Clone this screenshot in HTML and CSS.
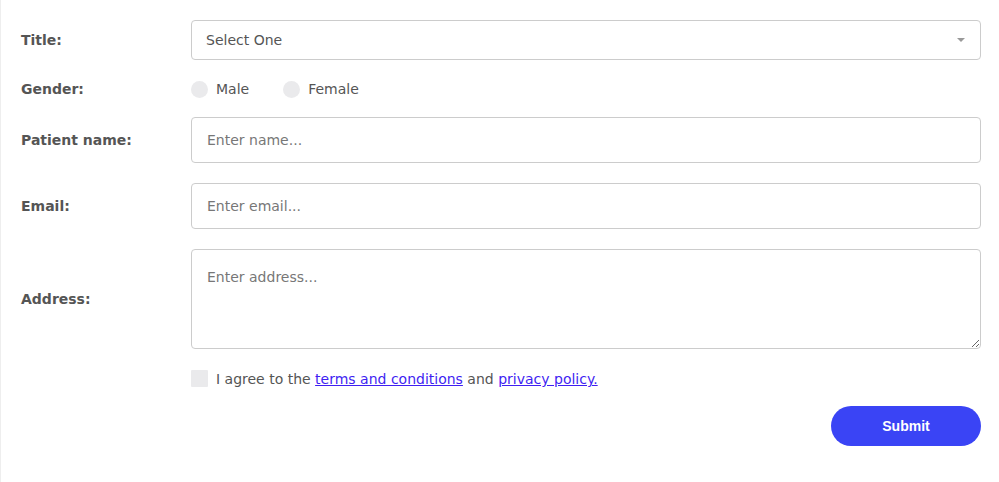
FILE: index.html
```html
<!DOCTYPE html>
<html lang="en">
<head>
<meta charset="utf-8">
<title>Patient form</title>
<link rel="stylesheet" href="styles.css">
</head>
<body>
<div class="page">
  <form class="form">
    <div class="row">
      <label class="label">Title:</label>
      <div class="field select-wrap">
        <select class="control select">
          <option>Select One</option>
        </select>
      </div>
    </div>
    <div class="row row-gender">
      <span class="label">Gender:</span>
      <div class="field radios">
        <label class="radio"><span class="dot"></span>Male</label>
        <label class="radio"><span class="dot"></span>Female</label>
      </div>
    </div>
    <div class="row">
      <label class="label">Patient name:</label>
      <div class="field"><input class="control input" type="text" placeholder="Enter name..."></div>
    </div>
    <div class="row">
      <label class="label">Email:</label>
      <div class="field"><input class="control input" type="text" placeholder="Enter email..."></div>
    </div>
    <div class="row">
      <label class="label">Address:</label>
      <div class="field"><textarea class="control textarea" placeholder="Enter address..."></textarea></div>
    </div>
    <div class="row row-agree">
      <span class="label"></span>
      <div class="field agree">
        <span class="box"></span>
        <span class="agree-text">I agree to the <a href="#">terms and conditions</a> and <a href="#">privacy policy.</a></span>
      </div>
    </div>
    <div class="actions">
      <button type="button" class="submit">Submit</button>
    </div>
  </form>
</div>
</body>
</html>
```
FILE: styles.css
```css
html, body {
  margin: 0;
  padding: 0;
  background: #fff;
  height: 100%;
}
.page {
  min-height: 100%;
  box-sizing: border-box;
  border-left: 1px solid #eeeeee;
  font-family: "DejaVu Sans", Verdana, sans-serif;
  font-size: 14px;
  color: #555;
}
.form {
  padding: 20px 18px 20px 20px;
  display: flex;
  flex-direction: column;
  gap: 20px;
}
.row {
  display: flex;
  align-items: center;
}
.label {
  width: 170px;
  flex: none;
  font-weight: bold;
  color: #555;
  line-height: 17px;
}
.row-gender {
  padding-top: 1px;
  margin-bottom: -1px;
}
.field {
  flex: 1;
  min-width: 0;
}
.control {
  display: block;
  width: 100%;
  box-sizing: border-box;
  border: 1px solid #cccccc;
  border-radius: 4px;
  background: #fff;
  font-family: "DejaVu Sans", Verdana, sans-serif;
  font-size: 14px;
  color: #555;
  margin: 0;
  outline: none;
}
.control::placeholder {
  color: #777;
  opacity: 1;
}
.select-wrap {
  position: relative;
}
.select {
  height: 40px;
  padding: 0 30px 0 14px;
  appearance: none;
  -webkit-appearance: none;
}
.select-wrap::after {
  content: "";
  position: absolute;
  right: 16px;
  top: 18px;
  border-left: 4px solid transparent;
  border-right: 4px solid transparent;
  border-top: 4px solid #999;
}
.input {
  height: 46px;
  padding: 0 15px;
}
.textarea {
  height: 100px;
  padding: 17px 15px 15px;
  line-height: 20px;
  resize: vertical;
}
.radios {
  display: flex;
  align-items: center;
  gap: 34px;
  line-height: 17px;
}
.radio {
  display: flex;
  align-items: center;
  gap: 8px;
}
.dot {
  width: 17px;
  height: 17px;
  border-radius: 50%;
  background: #eaeaec;
  display: inline-block;
}
.agree {
  display: flex;
  align-items: center;
  gap: 8px;
  line-height: 17px;
}
.agree-text {
  padding-top: 2px;
}
.box {
  width: 17px;
  height: 17px;
  background: #eaeaec;
  border-radius: 1px;
  flex: none;
}
.agree a {
  color: #3f1ff2;
  text-decoration: underline;
}
.actions {
  display: flex;
  justify-content: flex-end;
  margin-top: -2px;
}
.submit {
  width: 150px;
  height: 40px;
  border: none;
  border-radius: 20px;
  background: #3a44f5;
  color: #fff;
  font-family: "Liberation Sans", Arial, sans-serif;
  font-weight: bold;
  font-size: 14px;
  cursor: pointer;
}
```
